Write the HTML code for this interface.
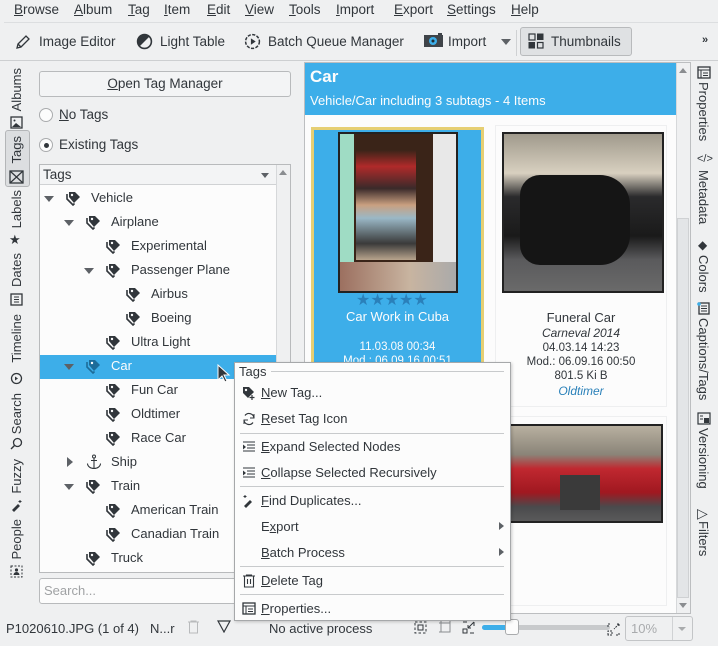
<!DOCTYPE html>
<html><head><meta charset="utf-8"><style>
*{margin:0;padding:0;box-sizing:border-box}
body{width:718px;height:646px;overflow:hidden;background:#eff0f1;font-family:"Liberation Sans","DejaVu Sans",sans-serif;font-size:13px;color:#31363b;position:relative}
.a{position:absolute;white-space:nowrap}
u{text-decoration:underline}
.vl{position:absolute;writing-mode:vertical-rl;transform:rotate(180deg);font-size:13px;white-space:nowrap}
.vr{position:absolute;writing-mode:vertical-rl;font-size:13px;white-space:nowrap}
.row{position:absolute;height:24px;line-height:24px;font-size:13px}
.tag{position:absolute;width:16px;height:16px}
.arr{position:absolute;width:0;height:0;border-left:5px solid transparent;border-right:5px solid transparent;border-top:6px solid #5d6166}
.arrr{position:absolute;width:0;height:0;border-top:5px solid transparent;border-bottom:5px solid transparent;border-left:6px solid #5d6166}
.mi{position:absolute;left:261px;font-size:13px;white-space:nowrap}
.sep{position:absolute;left:240px;width:264px;height:1px;background:#c8cacc}
</style></head><body>
<!-- menu bar -->
<div class="a" style="top:2px;left:14px;font-size:13.5px;word-spacing:0">
<span style="position:absolute;left:0"><u>B</u>rowse</span><span style="position:absolute;left:60px"><u>A</u>lbum</span><span style="position:absolute;left:114px"><u>T</u>ag</span><span style="position:absolute;left:150px"><u>I</u>tem</span><span style="position:absolute;left:193px"><u>E</u>dit</span><span style="position:absolute;left:231px"><u>V</u>iew</span><span style="position:absolute;left:275px"><u>T</u>ools</span><span style="position:absolute;left:322px"><u>I</u>mport</span><span style="position:absolute;left:380px"><u>E</u>xport</span><span style="position:absolute;left:433px"><u>S</u>ettings</span><span style="position:absolute;left:497px"><u>H</u>elp</span></div>
<div class="a" style="top:22px;left:4px;width:714px;height:1px;background:#dcdee0"></div>
<!-- toolbar -->
<svg class="a" style="left:15px;top:34px" width="16" height="16" viewBox="0 0 16 16"><path d="M2 14l1-4 8-8 3 3-8 8z M3 10l3 3" fill="none" stroke="#31363b" stroke-width="1.3"/></svg>
<div class="a" style="left:39px;top:34px;font-size:13.5px">Image Editor</div>
<svg class="a" style="left:136px;top:33px" width="17" height="17" viewBox="0 0 16 16"><circle cx="8" cy="8" r="6.5" fill="none" stroke="#31363b" stroke-width="1.5"/><path d="M3.4 12.6A6.5 6.5 0 0 1 12.6 3.4z" fill="#31363b"/></svg>
<div class="a" style="left:160px;top:34px;font-size:13.5px">Light Table</div>
<svg class="a" style="left:244px;top:33px" width="17" height="17" viewBox="0 0 16 16"><circle cx="8" cy="8" r="6.5" fill="none" stroke="#31363b" stroke-width="1.4" stroke-dasharray="3 1.3"/><path d="M6.5 5v6l4.5-3z" fill="#31363b"/></svg>
<div class="a" style="left:268px;top:34px;font-size:13.5px">Batch Queue Manager</div>
<svg class="a" style="left:424px;top:33px" width="19" height="15" viewBox="0 0 19 15"><rect x="0" y="2" width="19" height="12" fill="#3f4449"/><rect x="14" y="0" width="4" height="3" fill="#3f4449"/><circle cx="9" cy="8" r="4" fill="#3daee9"/><circle cx="9" cy="8" r="1.5" fill="#1d2a33"/></svg>
<div class="a" style="left:448px;top:34px;font-size:13.5px">Import</div>
<div class="arr" style="left:501px;top:39px"></div>
<div class="a" style="left:516px;top:30px;width:1px;height:26px;background:#cfd1d3"></div>
<div class="a" style="left:520px;top:27px;width:112px;height:29px;background:#dfe1e3;border:1px solid #b8babc;border-radius:3px"></div>
<svg class="a" style="left:528px;top:33px" width="16" height="16" viewBox="0 0 16 16"><rect x="1" y="1" width="6" height="6" fill="none" stroke="#31363b" stroke-width="1.2"/><rect x="9" y="0.5" width="6.5" height="6.5" fill="#31363b"/><rect x="0.5" y="9" width="6.5" height="6.5" fill="#31363b"/><rect x="9.5" y="9.5" width="5.5" height="5.5" fill="none" stroke="#31363b" stroke-width="1.2"/></svg>
<div class="a" style="left:551px;top:34px;font-size:13.5px">Thumbnails</div>
<div class="a" style="left:702px;top:34px;font-size:11px;font-weight:bold">»</div>
<div class="a" style="left:0;top:60px;width:718px;height:1px;background:#cdcfd1"></div>

<!-- left vertical tabs -->
<div class="a" style="left:5px;top:130px;width:25px;height:57px;border:1px solid #b4b6b8;border-radius:3px;background:#dcdee0"></div>
<div class="vl" style="left:9px;top:68px;">Albums</div>
<svg class="a" style="left:10px;top:116px" width="13" height="13" viewBox="0 0 13 13"><rect x="1" y="1" width="11" height="11" fill="none" stroke="#31363b" stroke-width="1.3"/><circle cx="4.5" cy="4.5" r="1" fill="#31363b"/><path d="M2 11l4-4 5 4z" fill="#31363b"/></svg>
<div class="vl" style="left:9px;top:136px;">Tags</div>
<svg class="a" style="left:9px;top:170px" width="15" height="14" viewBox="0 0 15 14"><rect x="1" y="1" width="13" height="12" fill="none" stroke="#31363b" stroke-width="1.3"/><path d="M1 1l13 12M14 1L1 13" stroke="#31363b" stroke-width="1.2"/></svg>
<div class="vl" style="left:9px;top:190px;">Labels</div>
<div class="a" style="left:9px;top:232px;font-size:13px">★</div>
<div class="vl" style="left:9px;top:253px;">Dates</div>
<svg class="a" style="left:10px;top:293px" width="13" height="13" viewBox="0 0 13 13"><rect x="1" y="1" width="11" height="11" fill="none" stroke="#31363b" stroke-width="1.3"/><path d="M4 4h5M4 6.5h5M4 9h5" stroke="#31363b"/></svg>
<div class="vl" style="left:9px;top:314px;">Timeline</div>
<svg class="a" style="left:10px;top:372px" width="13" height="13" viewBox="0 0 13 13"><circle cx="6.5" cy="6.5" r="5" fill="none" stroke="#31363b" stroke-width="1.3"/><path d="M5 4.5v4l3-2z" fill="#31363b"/></svg>
<div class="vl" style="left:9px;top:393px;">Search</div>
<svg class="a" style="left:10px;top:437px" width="13" height="13" viewBox="0 0 13 13"><circle cx="7.5" cy="5.5" r="4" fill="none" stroke="#31363b" stroke-width="1.3"/><path d="M4.5 8.5L1 12" stroke="#31363b" stroke-width="1.4"/></svg>
<div class="vl" style="left:9px;top:459px;">Fuzzy</div>
<svg class="a" style="left:10px;top:499px" width="13" height="13" viewBox="0 0 13 13"><path d="M2 11l6-6 2 2-6 6z" fill="#31363b"/><path d="M10 1v3M8.5 2.5h3" stroke="#31363b"/></svg>
<div class="vl" style="left:9px;top:519px;">People</div>
<svg class="a" style="left:10px;top:565px" width="13" height="13" viewBox="0 0 13 13"><rect x="1" y="1" width="11" height="11" fill="none" stroke="#31363b" stroke-dasharray="2 1.5"/><circle cx="6.5" cy="5" r="1.6" fill="#31363b"/><path d="M3.5 10a3 3 0 0 1 6 0z" fill="#31363b"/></svg>

<!-- left panel -->
<div class="a" style="left:39px;top:71px;width:252px;height:26px;border:1px solid #b8babc;border-radius:3px;background:#f3f4f5;text-align:center;line-height:24px;font-size:13.5px"><u>O</u>pen Tag Manager</div>
<div class="a" style="left:39px;top:108px;width:14px;height:14px;border:1px solid #a9abad;border-radius:50%;background:#fcfcfc"></div>
<div class="a" style="left:59px;top:107px;font-size:13.5px"><u>N</u>o Tags</div>
<div class="a" style="left:39px;top:138px;width:14px;height:14px;border:1px solid #a9abad;border-radius:50%;background:#fcfcfc"></div>
<div class="a" style="left:44px;top:143px;width:5px;height:5px;border-radius:50%;background:#31363b"></div>
<div class="a" style="left:59px;top:137px;font-size:13.5px">Existing Tags</div>
<!-- tree -->
<div class="a" style="left:39px;top:164px;width:252px;height:409px;border:1px solid #b8babc;background:#fcfcfc"></div>
<div class="a" style="left:40px;top:165px;width:236px;height:20px;background:#f3f4f5;border-bottom:1px solid #d0d2d4"></div>
<div class="a" style="left:43px;top:167px;font-size:13.5px">Tags</div>
<div class="arr" style="left:261px;top:173px;border-width:5px 4px 0 4px"></div>
<div class="a" style="left:276px;top:165px;width:14px;height:407px;background:#eff0f1;border-left:1px solid #d6d8da"></div>
<div class="a" style="left:279px;top:170px;width:0;height:0;border-left:4px solid transparent;border-right:4px solid transparent;border-bottom:5px solid #8a8d90"></div>
<div class="a" style="left:40px;top:355px;width:236px;height:24px;background:#3daee9"></div>

<div id="tree"></div>

<!-- right content -->
<div class="a" style="left:304px;top:62px;width:387px;height:552px;border:1px solid #bcbec0;background:#fcfcfc"></div>
<div class="a" style="left:305px;top:63px;width:371px;height:52px;background:#3daee9"></div>
<div class="a" style="left:310px;top:67px;color:#fcfcfc;font-size:17px;font-weight:bold">Car</div>
<div class="a" style="left:310px;top:93px;color:#fcfcfc;font-size:13px">Vehicle/Car including 3 subtags - 4 Items</div>
<div class="a" style="left:676px;top:63px;width:14px;height:550px;background:#eff0f1;border-left:1px solid #d6d8da"></div>
<div class="a" style="left:679px;top:68px;width:0;height:0;border-left:4px solid transparent;border-right:4px solid transparent;border-bottom:5px solid #8a8d90"></div>
<div class="a" style="left:677px;top:218px;width:12px;height:380px;background:#e3e5e7;border:1px solid #cfd1d3"></div>
<div class="a" style="left:679px;top:603px;width:0;height:0;border-left:4px solid transparent;border-right:4px solid transparent;border-top:5px solid #8a8d90"></div>

<!-- card 1 -->
<div class="a" style="left:311px;top:127px;width:173px;height:240px;background:#3daee9;border:3px solid #e6cf73;border-bottom:none"></div>
<div class="a" style="left:338px;top:132px;width:120px;height:161px;border:2px solid #222;background:linear-gradient(90deg,#9fdcc4 0 12%,#3a2418 12% 80%,#e8e8e8 80%)"></div>
<div class="a" style="left:356px;top:150px;width:60px;height:110px;background:linear-gradient(180deg,#3a2418 0,#b02a2a 15%,#3a2a2a 35%,#c9a080 50%,#9ab8c6 62%,#3a3a3a 85%,#b8a48c 100%)"></div>
<div class="a" style="left:340px;top:262px;width:116px;height:29px;background:linear-gradient(90deg,#9c7060,#c8b4a0 60%,#aaa 100%)"></div>
<div class="a" style="left:356px;top:290px;color:#2a80ba;font-size:16px;letter-spacing:0">★★★★★</div>
<div class="a" style="left:311px;top:309px;width:173px;text-align:center;color:#fcfcfc;font-size:13px">Car Work in Cuba</div>
<div class="a" style="left:311px;top:341px;width:173px;text-align:center;color:#fcfcfc;font-size:11.5px">11.03.08 00:34</div>
<div class="a" style="left:311px;top:355px;width:173px;text-align:center;color:#fcfcfc;font-size:11.5px">Mod.: 06.09.16 00:51</div>
<!-- card 2 -->
<div class="a" style="left:495px;top:125px;width:172px;height:282px;border:1px solid #eeeff0"></div>
<div class="a" style="left:502px;top:132px;width:162px;height:161px;border:2px solid #222;background:linear-gradient(180deg,#a09a8c 0,#d8d0c0 25%,#2a2a2c 40%,#1a1a1a 65%,#5a5a5c 80%,#6a6a6a 100%)"></div>
<div class="a" style="left:520px;top:175px;width:110px;height:90px;background:#151515;border-radius:20px 30px 30px 20px"></div>
<div class="a" style="left:495px;top:310px;width:172px;text-align:center;font-size:13px">Funeral Car</div>
<div class="a" style="left:495px;top:326px;width:172px;text-align:center;font-size:12px;font-style:italic">Carneval 2014</div>
<div class="a" style="left:495px;top:342px;width:172px;text-align:center;font-size:11.5px">04.03.14 14:23</div>
<div class="a" style="left:495px;top:356px;width:172px;text-align:center;font-size:11.5px">Mod.: 06.09.16 00:50</div>
<div class="a" style="left:495px;top:370px;width:172px;text-align:center;font-size:11.5px">801.5 Ki B</div>
<div class="a" style="left:495px;top:384px;width:172px;text-align:center;font-size:12px;font-style:italic;color:#2980b9">Oldtimer</div>
<!-- card 3 -->
<div class="a" style="left:495px;top:416px;width:172px;height:190px;border:1px solid #eeeff0"></div>
<div class="a" style="left:508px;top:424px;width:155px;height:99px;border:2px solid #222;background:linear-gradient(180deg,#b8b0a0 0,#8a8478 30%,#c02830 45%,#a01820 70%,#4a4a4c 85%,#5a5a5a 100%)"></div>
<div class="a" style="left:560px;top:475px;width:40px;height:35px;background:#3a3a3a"></div>

<!-- right vertical tabs -->
<svg class="a" style="left:697px;top:66px" width="14" height="13" viewBox="0 0 14 13"><rect x="1" y="1" width="12" height="11" fill="none" stroke="#31363b" stroke-width="1.3"/><path d="M1 4h12M4 4v8M6 7h5M6 9.5h5" stroke="#31363b"/></svg>
<div class="vr" style="left:696px;top:82px;">Properties</div>
<div class="a" style="left:697px;top:153px;font-size:11px">&lt;/&gt;</div>
<div class="vr" style="left:696px;top:170px;">Metadata</div>
<div class="a" style="left:698px;top:238px;font-size:12px">◆</div>
<div class="vr" style="left:696px;top:255px;">Colors</div>
<svg class="a" style="left:697px;top:302px" width="13" height="13" viewBox="0 0 13 13"><rect x="2" y="1" width="10" height="11" fill="none" stroke="#31363b" stroke-width="1.3"/><path d="M4 4h6M4 6.5h6M4 9h6" stroke="#31363b"/><circle cx="2" cy="2" r="1.8" fill="#3daee9"/></svg>
<div class="vr" style="left:696px;top:318px;">Captions/Tags</div>
<svg class="a" style="left:697px;top:412px" width="14" height="13" viewBox="0 0 14 13"><rect x="1" y="1" width="12" height="11" fill="none" stroke="#31363b" stroke-width="1.2"/><rect x="7" y="6" width="5" height="5" fill="#31363b"/><path d="M3 4h3M3 7h3" stroke="#31363b"/></svg>
<div class="vr" style="left:696px;top:428px;">Versioning</div>
<div class="a" style="left:697px;top:505px;font-size:14px">▷</div>
<div class="vr" style="left:696px;top:521px;">Filters</div>

<!-- search -->
<div class="a" style="left:39px;top:578px;width:252px;height:26px;border:1px solid #b8babc;border-radius:3px;background:#fcfcfc"></div>
<div class="a" style="left:44px;top:583px;color:#a0a2a4;font-size:13px">Search...</div>

<!-- status bar -->
<div class="a" style="left:6px;top:621px;font-size:13px">P1020610.JPG (1 of 4)</div>
<div class="a" style="left:150px;top:621px;font-size:13px">N...r</div>
<svg class="a" style="left:187px;top:620px" width="13" height="14" viewBox="0 0 13 14"><path d="M1 2h11M4 2V1h5v1M2.5 2v11h8V2" fill="none" stroke="#b8babc"/></svg>
<svg class="a" style="left:217px;top:620px" width="14" height="13" viewBox="0 0 14 13"><path d="M1 1h12L7 12z" fill="none" stroke="#31363b" stroke-width="1.2"/></svg>
<div class="a" style="left:269px;top:621px;font-size:13px">No active process</div>
<svg class="a" style="left:414px;top:621px" width="13" height="13" viewBox="0 0 13 13"><rect x="1" y="1" width="11" height="11" fill="none" stroke="#31363b" stroke-dasharray="2.5 2"/><rect x="4" y="4" width="5" height="5" fill="none" stroke="#31363b"/></svg>
<svg class="a" style="left:439px;top:621px" width="13" height="13" viewBox="0 0 13 13"><rect x="2" y="2" width="9" height="9" fill="none" stroke="#8a8d90"/><path d="M0 2h2M0 11h2M11 0v2M2 0v2" stroke="#8a8d90"/></svg>
<svg class="a" style="left:462px;top:621px" width="13" height="13" viewBox="0 0 13 13"><path d="M1 1h4M1 12V8M12 1v4M8 12h4M12 1L6 7M6 7h3M6 7v-3" fill="none" stroke="#31363b"/><rect x="1" y="8" width="4" height="4" fill="none" stroke="#31363b"/></svg>
<div class="a" style="left:482px;top:625px;width:128px;height:5px;border-radius:3px;background:#c8cacc"></div>
<div class="a" style="left:482px;top:625px;width:28px;height:5px;border-radius:3px;background:#3daee9"></div>
<div class="a" style="left:505px;top:619px;width:14px;height:16px;border:1px solid #a9abad;border-radius:3px;background:#fcfcfc"></div>
<svg class="a" style="left:607px;top:623px" width="13" height="13" viewBox="0 0 13 13"><path d="M1 4V1h3M9 12h3V9M12 1L7 6M12 1H9M12 1v3M1 12V8h4v4z" fill="none" stroke="#31363b" stroke-dasharray="2 1"/></svg>
<div class="a" style="left:625px;top:616px;width:68px;height:25px;border:1px solid #c3c5c7;border-radius:3px;background:#eff0f1"></div>
<div class="a" style="left:672px;top:617px;width:1px;height:23px;background:#d0d2d4"></div>
<div class="a" style="left:631px;top:621px;color:#a9abad;font-size:13px">10%</div>
<div class="a" style="left:678px;top:627px;width:0;height:0;border-left:4px solid transparent;border-right:4px solid transparent;border-top:4px solid #a9abad"></div>

<!-- context menu -->
<div class="a" style="left:234px;top:362px;width:277px;height:259px;background:#fcfcfc;border:1px solid #a6a8aa;box-shadow:1px 1px 3px rgba(0,0,0,.2)"></div>
<div class="a" style="left:239px;top:364px;font-size:13px">Tags</div>
<div class="a" style="left:271px;top:371px;width:233px;height:1px;background:#c8cacc"></div>
<svg class="a" style="left:242px;top:386px" width="14" height="14" viewBox="0 0 14 14"><path d="M1 1h6l5 5-6 6-5-5z" fill="#31363b"/><circle cx="4" cy="4" r="1.2" fill="#fcfcfc"/><path d="M10 9v5M7.5 11.5h5" stroke="#fcfcfc" stroke-width="3"/><path d="M10 9v5M7.5 11.5h5" stroke="#31363b" stroke-width="1.2"/></svg>
<div class="mi" style="top:385px"><u>N</u>ew Tag...</div>
<svg class="a" style="left:242px;top:412px" width="14" height="14" viewBox="0 0 14 14"><path d="M3 3.5A5 5 0 0 1 12 6M11 10.5A5 5 0 0 1 2 8" fill="none" stroke="#31363b" stroke-width="1.2"/><path d="M12 2v4h-4M2 12V8h4" fill="none" stroke="#31363b"/></svg>
<div class="mi" style="top:411px"><u>R</u>eset Tag Icon</div>
<div class="sep" style="top:433px"></div>
<svg class="a" style="left:242px;top:440px" width="14" height="14" viewBox="0 0 14 14"><path d="M1 2h12M5 5h8M5 8h8M1 11h12" stroke="#31363b"/><path d="M1 4.5v5l3-2.5z" fill="#31363b"/></svg>
<div class="mi" style="top:439px"><u>E</u>xpand Selected Nodes</div>
<svg class="a" style="left:242px;top:466px" width="14" height="14" viewBox="0 0 14 14"><path d="M1 2h12M5 5h8M5 8h8M1 11h12" stroke="#31363b"/><path d="M1 4.5v5l3-2.5z" fill="#31363b"/></svg>
<div class="mi" style="top:465px"><u>C</u>ollapse Selected Recursively</div>
<div class="sep" style="top:486px"></div>
<svg class="a" style="left:242px;top:494px" width="14" height="14" viewBox="0 0 14 14"><path d="M2 12l6-6 2 2-6 6z" fill="#31363b"/><path d="M3 1v3M1.5 2.5h3" stroke="#31363b"/></svg>
<div class="mi" style="top:493px"><u>F</u>ind Duplicates...</div>
<div class="mi" style="top:519px">E<u>x</u>port</div>
<div class="a" style="left:499px;top:522px;width:0;height:0;border-top:4px solid transparent;border-bottom:4px solid transparent;border-left:5px solid #5d6166"></div>
<div class="mi" style="top:545px"><u>B</u>atch Process</div>
<div class="a" style="left:499px;top:548px;width:0;height:0;border-top:4px solid transparent;border-bottom:4px solid transparent;border-left:5px solid #5d6166"></div>
<div class="sep" style="top:566px"></div>
<svg class="a" style="left:242px;top:574px" width="14" height="14" viewBox="0 0 14 14"><path d="M1 2h12M4.5 2V1h5v1M2.5 2v11h9V2M5.5 5v5M8.5 5v5" fill="none" stroke="#31363b" stroke-width="1.1"/></svg>
<div class="mi" style="top:573px"><u>D</u>elete Tag</div>
<div class="sep" style="top:594px"></div>
<svg class="a" style="left:242px;top:602px" width="14" height="13" viewBox="0 0 14 13"><rect x="1" y="1" width="12" height="11" fill="none" stroke="#31363b" stroke-width="1.3"/><path d="M1 4h12M4 4v8M6 7h5M6 9.5h5" stroke="#31363b"/></svg>
<div class="mi" style="top:601px"><u>P</u>roperties...</div>

<!-- cursor -->
<svg class="a" style="left:217px;top:364px" width="14" height="20" viewBox="0 0 14 20"><path d="M1 1v15l4-4 3 6 2-1-3-6h5z" fill="#31363b" stroke="#fcfcfc" stroke-width="1"/></svg>

<script>
var rows=[["Vehicle",0,1],["Airplane",1,1],["Experimental",2,0],["Passenger Plane",2,1],["Airbus",3,0],["Boeing",3,0],["Ultra Light",2,0],["Car",1,1],["Fun Car",2,0],["Oldtimer",2,0],["Race Car",2,0],["Ship",1,2],["Train",1,1],["American Train",2,0],["Canadian Train",2,0],["Truck",1,0]];
var h="";
rows.forEach(function(r,i){
 var y=186+i*24, x=40+r[1]*20;
 var sel=r[0]=="Car";
 if(r[2]==1) h+='<div class="arr" style="left:'+(x+4)+'px;top:'+(y+10)+'px"></div>';
 if(r[2]==2) h+='<div class="arrr" style="left:'+(x+7)+'px;top:'+(y+7)+'px"></div>';
 if(r[0]=="Ship") h+='<svg class="tag" style="left:'+(x+26)+'px;top:'+(y+4)+'px" viewBox="0 0 16 16"><circle cx="8" cy="2.5" r="1.5" fill="none" stroke="#31363b"/><path d="M8 4v10M5 6.5h6M1.5 9.5a6.5 5 0 0 0 13 0" fill="none" stroke="#31363b" stroke-width="1.1"/></svg>';
 else h+='<svg class="tag" style="left:'+(x+26)+'px;top:'+(y+4)+'px" viewBox="0 0 16 16"><path d="M3 7V2h6l5 5-6 6z" fill="'+(sel?'#1d6c99':'#31363b')+'"/><path d="M1 4v5l6 6 1.5-1.5" fill="none" stroke="'+(sel?'#1d6c99':'#31363b')+'" stroke-width="1.6"/><circle cx="6" cy="5" r="1.2" fill="#fcfcfc"/></svg>';
 h+='<div class="row" style="left:'+(x+51)+'px;top:'+y+'px;'+(sel?'color:#fcfcfc':'')+'">'+r[0]+'</div>';
});
document.getElementById("tree").innerHTML=h;
</script>
</body></html>
